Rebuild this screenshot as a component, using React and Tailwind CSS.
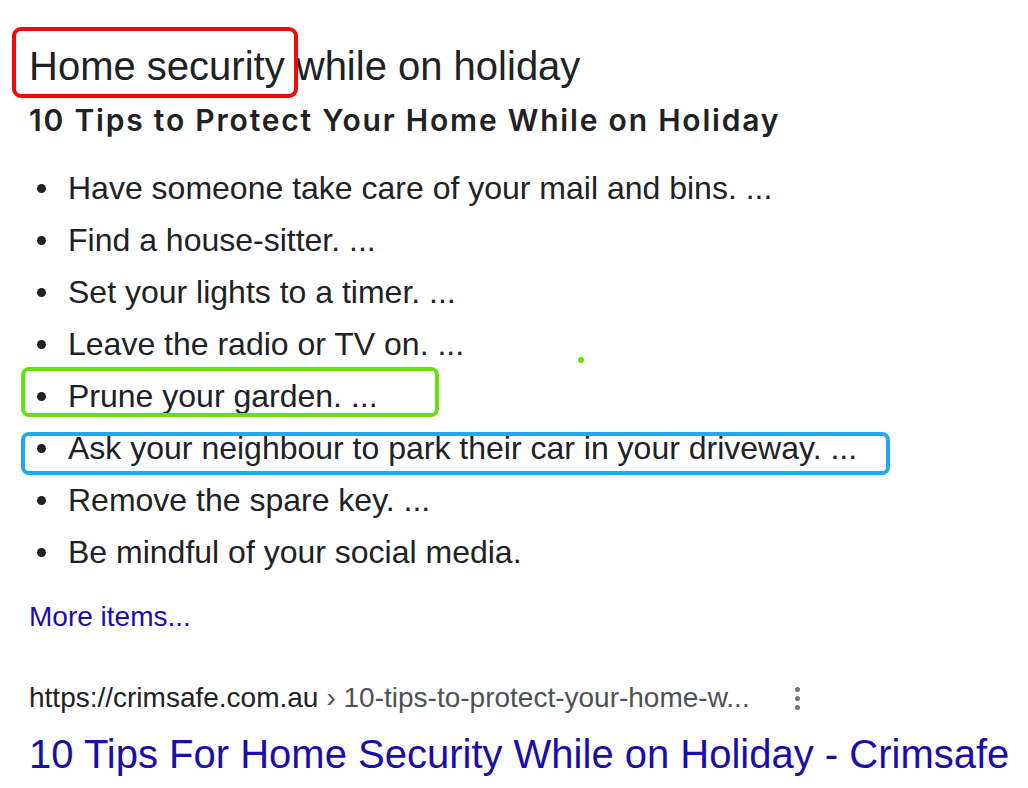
// App.jsx — search result snippet with annotation marks

const TIPS = [
  'Have someone take care of your mail and bins. ...',
  'Find a house-sitter. ...',
  'Set your lights to a timer. ...',
  'Leave the radio or TV on. ...',
  'Prune your garden. ...',
  'Ask your neighbour to park their car in your driveway. ...',
  'Remove the spare key. ...',
  'Be mindful of your social media.',
]

export default function App() {
  return (
    <div className="relative w-[1028px] h-[788px] overflow-hidden bg-white text-[#202124] font-['Liberation_Sans',Arial,sans-serif]">
      <div className="pl-[29px] pt-[42px]">
        <h1 className="text-[40px] leading-[48px]">Home security while on holiday</h1>
        <h2 className="mt-[12px] text-[30px] leading-[36px] font-semibold tracking-[1.8px] font-['Inter','Open_Sans',sans-serif]">
          10 Tips to Protect Your Home While on Holiday
        </h2>

        {/* List */}
        <ul className="mt-[24px]">
          {TIPS.map(t => (
            <li key={t} className="flex items-center h-[52px] text-[32px]">
              <span className="w-[9px] h-[9px] rounded-full bg-[#202124] ml-[8px] mr-[22px] shrink-0" />
              <span>{t}</span>
            </li>
          ))}
        </ul>

        <p className="mt-[22px] text-[28px] leading-[34px] text-[#1a0dab]">More items...</p>

        {/* Result */}
        <div className="mt-[47px] flex items-center h-[34px] text-[28px]">
          <span className="text-[#202124]">https://crimsafe.com.au</span>
          <span className="text-[#4d5156] ml-[8px]">› 10-tips-to-protect-your-home-w...</span>
          <span className="ml-[45px] flex flex-col gap-[4px]">
            <span className="w-[5px] h-[5px] rounded-full bg-[#70757a]" />
            <span className="w-[5px] h-[5px] rounded-full bg-[#70757a]" />
            <span className="w-[5px] h-[5px] rounded-full bg-[#70757a]" />
          </span>
        </div>
        <p className="mt-[16px] text-[40px] leading-[46px] text-[#1a0dab]">
          10 Tips For Home Security While on Holiday - Crimsafe
        </p>
      </div>

      {/* Annotation marks drawn over the screenshot */}
      <div className="absolute left-[12px] top-[27px] w-[286px] h-[71px] border-[4px] border-[#f00a0a] rounded-[9px]" />
      <div className="absolute left-[21px] top-[367px] w-[418px] h-[50px] border-[4px] border-[#66e00f] rounded-[8px]" />
      <div className="absolute left-[21px] top-[432px] w-[869px] h-[43px] border-[4px] border-[#1eaaf0] rounded-[8px]" />
      <div className="absolute left-[578px] top-[357px] w-[6px] h-[6px] rounded-full bg-[#66e00f]" />
    </div>
  )
}
